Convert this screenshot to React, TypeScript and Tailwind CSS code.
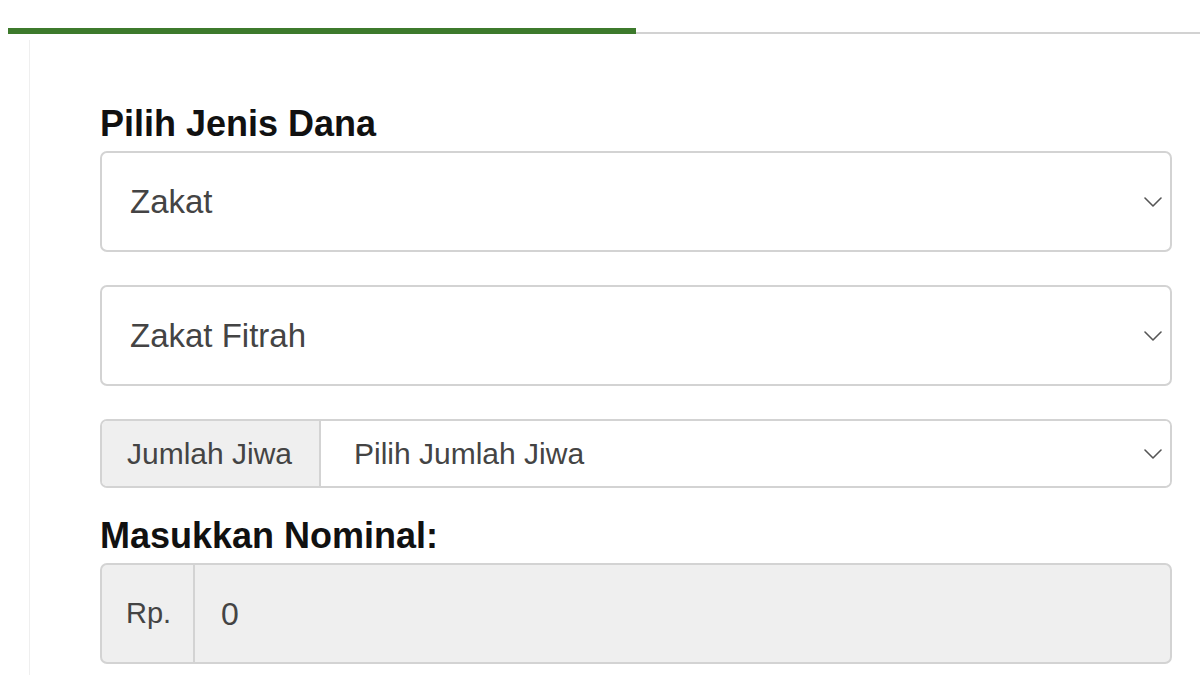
import React from 'react';

const Chevron = () => (
    <svg width="18" height="10" viewBox="0 0 18 10" fill="none" className="shrink-0">
        <polyline points="1,1 9,9 17,1" stroke="#555" strokeWidth="1.6" strokeLinecap="round" strokeLinejoin="round" />
    </svg>
);

const SelectBox = ({ value }: { value: string }) => (
    <div className="flex h-[101px] items-center justify-between rounded-[7px] border-2 border-[#d3d3d3] bg-white pl-[28px] pr-[8px]">
        <span className="text-[33px] text-[#444]">{value}</span>
        <Chevron />
    </div>
);

export default function App() {
    return (
        <div className="w-[1200px] h-[675px] overflow-hidden bg-white font-['Liberation_Sans',Arial,sans-serif]">
            {/* TABS */}
            <div className="flex h-[34px] items-end">
                <div className="ml-2 w-[628px] border-b-[6px] border-[#3d7a2c]" />
                <div className="flex-1 border-b-2 border-[#d2d2d2]" />
            </div>

            {/* CARD */}
            <div className="ml-[29px] mt-[6px] h-[700px] border-l border-[#efefef] pl-[70px] pr-[28px] pt-[62px]">
                <h2 className="text-[36px] font-bold leading-[43px] text-[#111]">Pilih Jenis Dana</h2>
                <div className="mt-[6px]">
                    <SelectBox value="Zakat" />
                </div>
                <div className="mt-[33px]">
                    <SelectBox value="Zakat Fitrah" />
                </div>

                <div className="mt-[33px] flex h-[69px] overflow-hidden rounded-[7px] border-2 border-[#d3d3d3]">
                    <div className="flex w-[219px] items-center border-r-2 border-[#d3d3d3] bg-[#efefef] pl-[25px] text-[30px] text-[#444]">
                        Jumlah Jiwa
                    </div>
                    <div className="flex flex-1 items-center justify-between bg-white pl-[33px] pr-[8px]">
                        <span className="text-[30px] text-[#444]">Pilih Jumlah Jiwa</span>
                        <Chevron />
                    </div>
                </div>

                <h2 className="mt-[26px] text-[36px] font-bold leading-[43px] text-[#111]">Masukkan Nominal:</h2>
                <div className="mt-[6px] flex h-[101px] overflow-hidden rounded-[7px] border-2 border-[#d3d3d3] bg-[#efefef]">
                    <div className="flex w-[93px] items-center border-r-2 border-[#d3d3d3] pl-[24px] text-[29px] text-[#444]">
                        Rp.
                    </div>
                    <div className="flex flex-1 items-center pl-[26px] text-[32px] text-[#444]">0</div>
                </div>
            </div>
        </div>
    );
}
